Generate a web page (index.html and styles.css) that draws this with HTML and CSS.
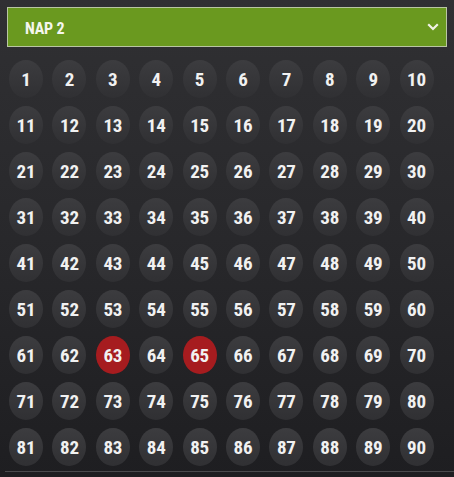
FILE: index.html
```html
<!DOCTYPE html>
<html>
<head>
<meta charset="utf-8">
<link rel="stylesheet" href="styles.css">
</head>
<body>
<div class="panel">
  <div class="select">
    <span class="select-label">NAP 2</span>
    <svg class="chevron" width="12" height="8" viewBox="0 0 12 8"><path d="M1.2 1.3 L6 6 L10.8 1.3" fill="none" stroke="#f2f2e8" stroke-width="2.2"/></svg>
  </div>
  <div class="grid" id="grid"></div>
  <div class="rule"></div>
</div>
<script>
  var g = document.getElementById('grid');
  var sel = [63, 65];
  for (var i = 1; i <= 90; i++) {
    var d = document.createElement('div');
    d.className = 'ball' + (sel.indexOf(i) >= 0 ? ' ball-on' : '');
    var s = document.createElement('span');
    s.className = 'num';
    s.textContent = i;
    d.appendChild(s);
    g.appendChild(d);
  }
</script>
</body>
</html>
```
FILE: styles.css
```css
html, body {
  margin: 0;
  padding: 0;
}
body {
  width: 454px;
  height: 477px;
  overflow: hidden;
  background: linear-gradient(#303033 0%, #28282b 50%, #1e1e21 100%);
  font-family: Roboto, "Liberation Sans", sans-serif;
}
.panel {
  padding-top: 7px;
  display: flex;
  flex-direction: column;
}
.select {
  margin-left: 7px;
  box-sizing: border-box;
  width: 440px;
  height: 40px;
  border: 1px solid #b9c6a3;
  background: #6a991f;
  display: flex;
  align-items: center;
  justify-content: space-between;
  padding: 0 7px 0 17px;
}
.select-label {
  color: #f4f6ee;
  font-weight: 700;
  font-size: 16px;
  font-stretch: 80%;
  letter-spacing: -0.2px;
  padding-top: 2px;
}
.chevron {
  display: block;
}
.grid {
  margin-top: 13px;
  margin-left: 9px;
  display: grid;
  grid-template-columns: repeat(10, 34px);
  grid-auto-rows: 38px;
  column-gap: 9.4px;
  row-gap: 8px;
}
.ball {
  border-radius: 50%;
  background: linear-gradient(#3c3c3f, #303033);
  display: flex;
  align-items: center;
  justify-content: center;
}
.ball-on {
  background: #a61c1f;
}
.num {
  color: #f1f1f1;
  font-weight: 700;
  font-size: 19px;
  font-stretch: 80%;
  letter-spacing: -0.2px;
  padding-top: 1px;
}
.rule {
  margin-top: 5px;
  margin-left: 5px;
  height: 1px;
  background: #4a4a4d;
}
```
